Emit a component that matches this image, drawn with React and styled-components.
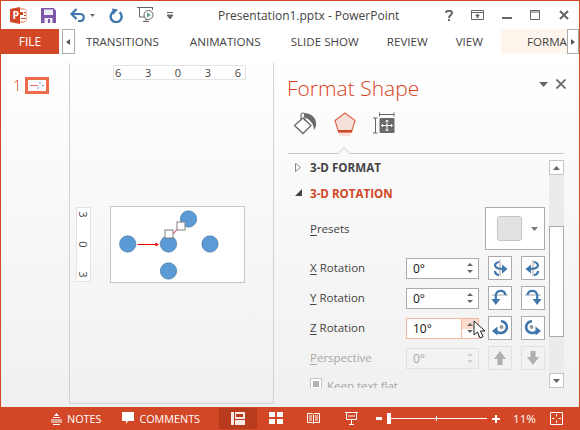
import React from 'react';
import styled, { createGlobalStyle } from 'styled-components';

const RED = '#d24726';
const BLUE = '#3f76ad';

const GlobalStyle = createGlobalStyle`
  html, body {
    margin: 0;
    padding: 0;
    width: 580px;
    height: 430px;
    overflow: hidden;
    background: #fff;
  }
  * { box-sizing: border-box; }
`;

const Window = styled.div`
  width: 580px;
  height: 430px;
  display: flex;
  flex-direction: column;
  border: 1px solid ${RED};
  border-bottom: none;
  font-family: "Open Sans", "Liberation Sans", sans-serif;
  color: #444;
  position: relative;
  overflow: hidden;
`;

const TitleBar = styled.div`
  height: 28px;
  flex: none;
  display: flex;
  align-items: center;
  position: relative;
`;

const QatIcon = styled.span`
  display: flex;
  flex: none;
  margin-left: ${p => p.$gap}px;
`;

const TitleText = styled.div`
  position: absolute;
  left: 217px;
  top: 7px;
  font-size: 12px;
  line-height: 16px;
  color: #444;
  white-space: nowrap;
`;

const WindowButtons = styled.div`
  margin-left: auto;
  display: flex;
  align-items: center;
  gap: 18px;
  padding-right: 10px;
`;

const RibbonRow = styled.div`
  height: 25px;
  flex: none;
  display: flex;
  align-items: stretch;
`;

const FileTab = styled.div`
  width: 59px;
  background: ${RED};
  color: #fff;
  font-size: 12px;
  line-height: 25px;
  text-align: center;
`;

const RibbonScroll = styled.div`
  width: ${p => p.$w}px;
  height: 25px;
  flex: none;
  background: #fff;
  border: 1px solid #ababab;
  margin-left: ${p => p.$left}px;
  display: flex;
  align-items: center;
  justify-content: center;
`;

const RibbonTab = styled.div`
  margin-left: ${p => p.$left}px;
  font-size: 11.6px;
  line-height: 25px;
  color: #444;
  white-space: nowrap;
`;

const ActiveTab = styled.div`
  margin-left: 18px;
  width: 66px;
  flex: none;
  background: #fef6ec;
  font-size: 11.6px;
  line-height: 25px;
  color: #444;
  padding-left: 26px;
  white-space: nowrap;
  overflow: hidden;
`;

const Main = styled.div`
  flex: 1;
  min-height: 0;
  display: flex;
  background: linear-gradient(#ffffff 0%, #fbfbfb 25%, #f0f0f0 100%);
`;

const Thumbs = styled.div`
  width: 68px;
  flex: none;
  display: flex;
  align-items: flex-start;
  padding: 23px 0 0 12px;
  gap: 4px;
`;

const ThumbNumber = styled.div`
  width: 8px;
  font-size: 15px;
  line-height: 17px;
  font-weight: 300;
  color: ${RED};
`;

const Thumb = styled.div`
  width: 24px;
  height: 17px;
  border: 3px solid #ee6a4c;
  background: #fff;
  display: flex;
`;

const Canvas = styled.div`
  width: 205px;
  flex: none;
  margin: 9px 0 3px;
  border-left: 1px solid #d2d2d2;
  border-right: 1px solid #d2d2d2;
  border-bottom: 1px solid #d2d2d2;
  display: flex;
  flex-direction: column;
  padding-top: 2px;
`;

const TopRuler = styled.div`
  width: 133px;
  height: 15px;
  margin-left: 43px;
  background: #fff;
  border: 1px solid #e3e3e3;
  display: flex;
  justify-content: space-between;
  padding: 0 4px 0 1px;
  font-size: 11px;
  line-height: 13px;
  color: #444;
`;

const SlideRow = styled.div`
  display: flex;
  align-items: flex-start;
  margin: 126px 0 0 6px;
  gap: 19px;
`;

const SideRuler = styled.div`
  width: 15px;
  height: 75px;
  margin-top: 1px;
  background: #fff;
  border: 1px solid #e3e3e3;
  display: flex;
  flex-direction: column;
  align-items: center;
  justify-content: space-between;
  padding: 0;
`;

const RulerDigit = styled.span`
  display: block;
  height: 13px;
  width: 13px;
  font-size: 11px;
  line-height: 13px;
  text-align: center;
  transform: rotate(90deg);
  color: #444;
`;

const Slide = styled.div`
  width: 135px;
  height: 77px;
  background: #fff;
  border: 1px solid #c6c6c6;
  display: flex;
`;

const Panel = styled.div`
  flex: 1;
  min-width: 0;
  display: flex;
  flex-direction: column;
  padding-bottom: 19px;
`;

const PanelHeader = styled.div`
  height: 50px;
  flex: none;
  display: flex;
  align-items: flex-start;
  padding: 19px 13px 0 13px;
`;

const PanelTitle = styled.div`
  font-size: 21px;
  line-height: 30px;
  font-weight: 300;
  color: #d8401a;
  white-space: nowrap;
`;

const PanelControls = styled.div`
  margin-left: auto;
  display: flex;
  align-items: center;
  gap: 8px;
  height: 22px;
`;

const PanelTabs = styled.div`
  height: 40px;
  flex: none;
  display: flex;
  align-items: flex-start;
  padding: 8px 0 0 19px;
  gap: 17px;
`;

const TabDivider = styled.div`
  height: 10px;
  flex: none;
  margin: 0 15px 0 14px;
  display: flex;
`;

const PanelBody = styled.div`
  flex: 1;
  min-height: 0;
  display: flex;
`;

const Settings = styled.div`
  width: 275px;
  flex: none;
  overflow: hidden;
  padding-left: 21px;
  display: flex;
  flex-direction: column;
`;

const SectionHead = styled.div`
  height: 26px;
  flex: none;
  display: flex;
  align-items: center;
  gap: 8px;
  font-size: 11.6px;
  font-weight: 700;
  color: ${p => (p.$open ? RED : '#444')};
  white-space: nowrap;
`;

const PresetRow = styled.div`
  height: 43px;
  flex: none;
  display: flex;
  align-items: center;
  margin-top: 1px;
  padding-left: 15px;
`;

const RowLabel = styled.div`
  width: 96px;
  flex: none;
  font-size: 11.5px;
  line-height: 16px;
  color: ${p => (p.$off ? '#a6a6a6' : '#444')};
  white-space: nowrap;
  u { text-underline-offset: 2px; }
`;

const PresetBox = styled.div`
  width: 60px;
  height: 43px;
  margin-left: 79px;
  background: #fff;
  border: 1px solid #ababab;
  display: flex;
  align-items: center;
  padding-left: 11px;
  gap: 9px;
`;

const PresetSwatch = styled.div`
  width: 25px;
  height: 25px;
  background: #e2e2e2;
  border: 1px solid #c4c4c4;
  border-radius: 3px;
`;

const RotationRows = styled.div`
  display: flex;
  flex-direction: column;
  gap: 6px;
  margin-top: 6px;
  flex: none;
`;

const RotationRow = styled.div`
  height: 24px;
  display: flex;
  align-items: center;
  padding-left: 15px;
`;

const Spin = styled.div`
  width: 73px;
  height: 21px;
  flex: none;
  background: ${p => (p.$off ? 'transparent' : '#fff')};
  border: 1px solid ${p => (p.$hot ? '#f2b9a0' : p.$off ? '#e1e1e1' : '#ababab')};
  display: flex;
  align-items: center;
  font-size: 12px;
  color: ${p => (p.$off ? '#a6a6a6' : '#111')};
  padding-left: 6px;
`;

const SpinValue = styled.span`
  flex: 1;
`;

const SpinArrows = styled.div`
  width: 17px;
  align-self: stretch;
  display: flex;
  flex-direction: column;
  align-items: center;
  justify-content: center;
  gap: 4px;
  background: ${p => (p.$hot ? 'linear-gradient(#fbdccf 50%, transparent 50%)' : 'transparent')};
  border-left: ${p => (p.$hot ? '1px solid #f2b9a0' : 'none')};
`;

const SpinTip = styled.i`
  width: 0;
  height: 0;
  border-left: 3px solid transparent;
  border-right: 3px solid transparent;
  ${p => (p.$down
    ? `border-top: 3px solid ${p.$off ? '#d0d0d0' : '#666'};`
    : `border-bottom: 3px solid ${p.$off ? '#d0d0d0' : '#666'};`)}
`;

const IconButton = styled.div`
  width: 24px;
  height: 24px;
  flex: none;
  margin-left: ${p => p.$left}px;
  background: ${p => (p.$off ? 'transparent' : '#fff')};
  border: 1px solid ${p => (p.$off ? '#e1e1e1' : '#ababab')};
  display: flex;
  align-items: center;
  justify-content: center;
`;

const KeepRow = styled.div`
  height: 16px;
  margin-top: 6px;
  padding-left: 15px;
  flex: none;
  display: flex;
  align-items: center;
  gap: 5px;
  font-size: 11.5px;
  color: #a6a6a6;
`;

const KeepLabel = styled.span`
  margin-top: 3px;
  white-space: nowrap;
`;

const KeepCheck = styled.div`
  width: 12px;
  height: 12px;
  border: 1px solid #c6c6c6;
  background: #fff;
  padding: 2px;
  &::after {
    content: '';
    display: block;
    width: 100%;
    height: 100%;
    background: #b4b4b4;
  }
`;

const ScrollBar = styled.div`
  width: 15px;
  flex: none;
  display: flex;
  flex-direction: column;
  margin-top: 6px;
  background: #ebebeb;
`;

const ScrollButton = styled.div`
  width: 15px;
  height: 15px;
  flex: none;
  background: #fff;
  border: 1px solid #c6c6c6;
  display: flex;
  align-items: center;
  justify-content: center;
`;

const ScrollThumb = styled.div`
  flex: none;
  height: 111px;
  margin-top: 51px;
  background: #fff;
  border: 1px solid #ababab;
`;

const ScrollSpacer = styled.div`
  flex: 1;
`;

const StatusBar = styled.div`
  height: 23px;
  flex: none;
  margin: 0 -1px;
  background: ${RED};
  color: #fff;
  display: flex;
  align-items: stretch;
  font-size: 10.8px;
`;

const StatusItem = styled.div`
  display: flex;
  align-items: center;
  gap: 5px;
  margin-left: ${p => p.$left}px;
  white-space: nowrap;
`;

const ZoomLabel = styled(StatusItem)`
  font-size: 11.6px;
  margin-left: 13px;
`;

const ViewActive = styled.div`
  width: 38px;
  margin: 1px 0 1px 19px;
  background: #b83b1d;
  display: flex;
  align-items: center;
  justify-content: center;
`;

const ZoomTrack = styled.div`
  width: 100px;
  height: 1px;
  background: #fff;
  align-self: center;
  position: relative;
`;

const ZoomKnob = styled.div`
  position: absolute;
  left: 0;
  top: -5px;
  width: 4px;
  height: 11px;
  background: #fff;
`;

const ZoomTick = styled.div`
  position: absolute;
  left: 49px;
  top: -2px;
  width: 1px;
  height: 5px;
  background: #fff;
`;

const Cursor = styled.svg`
  position: absolute;
  left: 472px;
  top: 319px;
`;

const PptLogo = () => (
  <svg width="18" height="17" viewBox="0 0 18 17">
    <path d="M6 1h8l3 2v11l-3 2H6z" fill="#f3b9a6" />
    <rect x="8" y="3" width="8" height="11" fill="#fff" />
    <path d="M10 5h3v3h-3zM14 5h2v1h-2zM14 8h2v1h-2zM11 11h5v1h-5z" fill="#d24726" />
    <path d="M0 2l10-2v17L0 15z" fill="#d24726" />
    <text x="2.400" y="12.300" fontSize="10.500" fontWeight="700" fill="#fff" fontFamily="Open Sans, sans-serif">P</text>
  </svg>
);

const SaveIcon = () => (
  <svg width="15" height="15" viewBox="0 0 15 15">
    <path d="M0 0h12.500L15 2.500V15H0z" fill="#7f57a8" />
    <rect x="3" y="1.500" width="9" height="5.500" fill="#f0ebf5" />
    <rect x="3.500" y="10" width="8" height="5" fill="#f0ebf5" />
    <rect x="7" y="11" width="2" height="4" fill="#7f57a8" />
  </svg>
);

const UndoIcon = () => (
  <svg width="15" height="14" viewBox="0 0 15 14" fill="none">
    <path d="M2 6h8c5 0 5 7 0 7H8" stroke={BLUE} strokeWidth="2.200" />
    <path d="M6.500 1L1.500 6l5 5" stroke={BLUE} strokeWidth="2.200" />
  </svg>
);

const RedoIcon = () => (
  <svg width="14" height="15" viewBox="0 0 14 15" fill="none">
    <path d="M4.500 3.800A5.500 5.500 0 1 0 10.500 4.200" stroke={BLUE} strokeWidth="2.400" />
    <path d="M3 .500L9 1.500 4 7z" fill={BLUE} />
  </svg>
);

const PresentIcon = () => (
  <svg width="17" height="16" viewBox="0 0 17 16" fill="none">
    <path d="M0 .500h16" stroke="#666" />
    <path d="M2.500 1v9h5" stroke="#666" />
    <path d="M15.500 1v2" stroke="#666" />
    <circle cx="11.500" cy="8" r="4.500" stroke="#666" />
    <path d="M10 5.500l4 2.500-4 2.500z" fill="#5aa58c" />
    <path d="M6 14.500h6M9 12v3" stroke="#666" />
  </svg>
);

const Tiny = ({ down = true, color = '#666', w = 5 }) => (
  <svg width={w * 2 - 1} height={w} viewBox={`0 0 ${w * 2 - 1} ${w}`}>
    <path d={down ? `M0 0h${w * 2 - 1}L${w - 0.5} ${w}z` : `M0 ${w}h${w * 2 - 1}L${w - 0.5} 0z`} fill={color} />
  </svg>
);

const FillIcon = () => (
  <svg width="24" height="23" viewBox="0 0 24 23" fill="none">
    <path d="M10 6L1.500 13.500 10 21.500l8-8z" stroke="#6a6a6a" strokeWidth="1.300" fill="#fff" />
    <path d="M8 8V3a2 2 0 0 1 4 0v6" stroke="#6a6a6a" strokeWidth="1.100" />
    <path d="M11 1c5 0 11 3 12 9 .5 3-.5 6-2 8-.5-4-1-6-3-8-1-2-4-4-7-5z" fill="#6a6a6a" />
  </svg>
);

const EffectIcon = () => (
  <svg width="22" height="25" viewBox="0 0 22 25">
    <path d="M11 1L21 8.500 17.500 20h-13L1 8.500z" fill="#f8e0da" stroke="#d9694c" strokeWidth="1.200" />
    <rect x="4" y="18" width="14" height="2.400" fill="#d24726" />
    <path d="M5 21h12l-1 3H6z" fill="#f8e0da" />
  </svg>
);

const SizeIcon = () => (
  <svg width="22" height="22" viewBox="0 0 22 22">
    <path d="M6.500 .5v4M21 .5v4M6.500 2.500h14.500M4.500 6H0M4.500 21H0M2.500 6v15" stroke="#666" fill="none" strokeWidth="1" />
    <rect x="6.500" y="6" width="15" height="15" rx="1" fill="#6a6a6a" />
    <path d="M14 8v11M8.500 13.500h11M12.500 9.500L14 8l1.500 1.500M12.500 17.500L14 19l1.500-1.500M10 12l-1.500 1.500L10 15M18 12l1.500 1.500L18 15" stroke="#fff" fill="none" strokeWidth="1" />
  </svg>
);

// arrows on the rotation buttons
const RotIcon = ({ kind, flip }) => {
  const paths = {
    x: (
      <>
        <path d="M9 1v16" stroke="#8a8a8a" strokeWidth=".8" />
        <path d="M8 3C4 3.500 3 6.500 5 8.200c1 1.300 4 1.800 7 1.800" stroke={BLUE} strokeWidth="2.200" fill="none" />
        <path d="M11 5.500l5.500 4.500L11 14.500z" fill={BLUE} />
        <path d="M4 12c0 2.500 2 3.800 4 4.300" stroke={BLUE} strokeWidth="2.200" fill="none" />
      </>
    ),
    y: (
      <>
        <path d="M1 6h16" stroke="#8a8a8a" strokeWidth=".8" />
        <path d="M14.500 6C13.500 .5 6 .5 4.800 6v5" stroke={BLUE} strokeWidth="2.200" fill="none" />
        <path d="M.5 10h8.800L4.800 16z" fill={BLUE} />
      </>
    ),
    z: (
      <>
        <circle cx="10.500" cy="8" r="2" fill="#9a9a9a" />
        <path d="M10 2.200A5.900 5.900 0 1 1 6 12.500" stroke={BLUE} strokeWidth="2.600" fill="none" />
        <path d="M6.500 7.500L1 12l5.500 4.500z" fill={BLUE} />
      </>
    ),
  };
  return (
    <svg width="18" height="18" viewBox="0 0 18 18" style={flip ? { transform: 'scaleX(-1)' } : undefined}>
      {paths[kind]}
    </svg>
  );
};

const BlockArrow = ({ down }) => (
  <svg width="12" height="14" viewBox="0 0 12 14">
    <path d={down ? 'M3.500 0h5v6H12l-6 8-6-8h3.500z' : 'M3.500 14h5V8H12L6 0 0 8h3.500z'} fill="#b0b0b0" />
  </svg>
);

const rotationRows = [
  { label: 'X', rest: ' Rotation', value: '0°', kind: 'x' },
  { label: 'Y', rest: ' Rotation', value: '0°', kind: 'y' },
  { label: 'Z', rest: ' Rotation', value: '10°', kind: 'z', hot: true },
];

const App = () => (
  <Window>
    <GlobalStyle />
    <TitleBar>
      <QatIcon $gap={9}><PptLogo /></QatIcon>
      <QatIcon $gap={13}><SaveIcon /></QatIcon>
      <QatIcon $gap={14}><UndoIcon /></QatIcon>
      <QatIcon $gap={5}><Tiny w={3} /></QatIcon>
      <QatIcon $gap={14}><RedoIcon /></QatIcon>
      <QatIcon $gap={14}><PresentIcon /></QatIcon>
      <QatIcon $gap={13}>
        <svg width="6" height="7" viewBox="0 0 6 7">
          <path d="M0 .5h6M0 3h6L3 7z" stroke="#666" strokeWidth="1" fill="#666" />
        </svg>
      </QatIcon>
      <TitleText>Presentation1.pptx - PowerPoint</TitleText>
      <WindowButtons>
        <svg width="8" height="11" viewBox="0 0 8 11">
          <path d="M1 3c0-3 6-3 6 0 0 2-3 2-3 5" stroke="#666" strokeWidth="2" fill="none" />
          <rect x="3" y="9" width="2" height="2" fill="#666" />
        </svg>
        <svg width="13" height="10" viewBox="0 0 13 10">
          <path d="M.500.500h12v9H.500zM.500 2.500h12" stroke="#666" fill="none" />
          <path d="M6.500 3.500L9 6H7.500v2h-2V6H4z" fill="#666" />
        </svg>
        <svg width="10" height="10" viewBox="0 0 10 10">
          <rect y="7" width="10" height="2" fill="#666" />
        </svg>
        <svg width="11" height="10" viewBox="0 0 11 10">
          <path d="M.500.500h9v9h-9zM.500 2h9" stroke="#666" fill="none" strokeWidth="1" />
        </svg>
        <svg width="10" height="10" viewBox="0 0 10 10">
          <path d="M1 1l8 8M9 1l-8 8" stroke="#666" strokeWidth="2" />
        </svg>
      </WindowButtons>
    </TitleBar>

    <RibbonRow>
      <FileTab>FILE</FileTab>
      <RibbonScroll $w={13} $left={3}><svg width="4" height="6"><path d="M4 0v6L0 3z" fill="#555" /></svg></RibbonScroll>
      <RibbonTab $left={11}>TRANSITIONS</RibbonTab>
      <RibbonTab $left={31}>ANIMATIONS</RibbonTab>
      <RibbonTab $left={30}>SLIDE SHOW</RibbonTab>
      <RibbonTab $left={28}>REVIEW</RibbonTab>
      <RibbonTab $left={28}>VIEW</RibbonTab>
      <ActiveTab>FORMAT</ActiveTab>
      <RibbonScroll $w={12} $left={0}><svg width="4" height="6"><path d="M0 0v6l4-3z" fill="#555" /></svg></RibbonScroll>
    </RibbonRow>

    <Main>
      <Thumbs>
        <ThumbNumber>1</ThumbNumber>
        <Thumb>
          <svg width="18" height="11" viewBox="0 0 18 11">
            <path d="M2 5.500h8" stroke="#e36a6a" strokeWidth="1" />
            <path d="M11 3h2M14 5.500h2M9 8h2" stroke="#5b9bd5" strokeWidth="1.200" />
          </svg>
        </Thumb>
      </Thumbs>

      <Canvas>
        <TopRuler>
          <span>6</span><span>3</span><span>0</span><span>3</span><span>6</span>
        </TopRuler>
        <SlideRow>
          <SideRuler>
            <RulerDigit>3</RulerDigit>
            <RulerDigit>0</RulerDigit>
            <RulerDigit>3</RulerDigit>
          </SideRuler>
          <Slide>
            <svg width="133" height="75" viewBox="0 0 133 75">
              <g fill="#5b9bd5" stroke="#41719c" strokeWidth=".6">
                <circle cx="16.700" cy="37" r="8.200" />
                <circle cx="57.500" cy="37" r="8.200" />
                <circle cx="99" cy="37" r="8.200" />
                <circle cx="57.500" cy="64" r="8.200" />
                <circle cx="77.500" cy="12" r="8.200" />
              </g>
              <path d="M26.500 37.500H45" stroke="#f00000" strokeWidth="1" />
              <path d="M48 37.500l-3.500-2v4z" fill="#f00000" />
              <path d="M62 27l6-7" stroke="#f08080" strokeWidth="1.200" />
              <rect x="54" y="23" width="8" height="8" fill="#fff" stroke="#808080" />
              <rect x="66" y="15" width="8" height="8" fill="#fff" stroke="#808080" />
            </svg>
          </Slide>
        </SlideRow>
      </Canvas>

      <Panel>
        <PanelHeader>
          <PanelTitle>Format Shape</PanelTitle>
          <PanelControls>
            <Tiny w={5} color="#666" />
            <svg width="10" height="10" viewBox="0 0 10 10">
              <path d="M.500.500l9 9M9.500.500l-9 9" stroke="#666" strokeWidth="1.800" />
            </svg>
          </PanelControls>
        </PanelHeader>
        <PanelTabs>
          <FillIcon />
          <EffectIcon />
          <SizeIcon />
        </PanelTabs>
        <TabDivider>
          <svg width="276" height="10" viewBox="0 0 276 10">
            <path d="M0 9.500h50l6-6 6 6h214" stroke="#c8c8c8" fill="none" />
          </svg>
        </TabDivider>
        <PanelBody>
          <Settings>
            <SectionHead>
              <svg width="7" height="9" viewBox="0 0 7 9"><path d="M.500.500v8l5-4z" stroke="#888" fill="#fff" /></svg>
              3-D FORMAT
            </SectionHead>
            <SectionHead $open>
              <svg width="7" height="9" viewBox="0 0 7 9"><path d="M0 7h7V0z" fill="#444" /></svg>
              3-D ROTATION
            </SectionHead>
            <PresetRow>
              <RowLabel><u>P</u>resets</RowLabel>
              <PresetBox>
                <PresetSwatch />
                <Tiny w={4} color="#777" />
              </PresetBox>
            </PresetRow>
            <RotationRows>
              {rotationRows.map(row => (
                <RotationRow key={row.kind}>
                  <RowLabel><u>{row.label}</u>{row.rest}</RowLabel>
                  <Spin $hot={row.hot}>
                    <SpinValue>{row.value}</SpinValue>
                    <SpinArrows $hot={row.hot}>
                      <SpinTip />
                      <SpinTip $down />
                    </SpinArrows>
                  </Spin>
                  <IconButton $left={9}><RotIcon kind={row.kind} /></IconButton>
                  <IconButton $left={9}><RotIcon kind={row.kind} flip /></IconButton>
                </RotationRow>
              ))}
              <RotationRow>
                <RowLabel $off><u>P</u>erspective</RowLabel>
                <Spin $off>
                  <SpinValue>0°</SpinValue>
                  <SpinArrows>
                    <SpinTip $off />
                    <SpinTip $off $down />
                  </SpinArrows>
                </Spin>
                <IconButton $off $left={9}><BlockArrow /></IconButton>
                <IconButton $off $left={9}><BlockArrow down /></IconButton>
              </RotationRow>
            </RotationRows>
            <KeepRow>
              <KeepCheck />
              <KeepLabel>Keep text flat</KeepLabel>
            </KeepRow>
          </Settings>
          <ScrollBar>
            <ScrollButton><Tiny w={4} down={false} color="#666" /></ScrollButton>
            <ScrollThumb />
            <ScrollSpacer />
            <ScrollButton><Tiny w={4} color="#666" /></ScrollButton>
          </ScrollBar>
        </PanelBody>
      </Panel>
    </Main>

    <StatusBar>
      <StatusItem $left={51}>
        <svg width="11" height="12" viewBox="0 0 11 12">
          <path d="M5.500 0l2.500 3H3z" fill="#fff" />
          <path d="M2 4.500h7M0 7h11M0 9h11M2 11.500h7" stroke="#fff" strokeWidth="1" />
        </svg>
        NOTES
      </StatusItem>
      <StatusItem $left={21}>
        <svg width="12" height="13" viewBox="0 0 12 13">
          <path d="M0 0h12v9H6l-2 3V9H0z" fill="#fff" />
        </svg>
        COMMENTS
      </StatusItem>
      <ViewActive>
        <svg width="14" height="13" viewBox="0 0 14 13">
          <path d="M0 0h14v13H0z" fill="#fbe9e4" />
          <path d="M3.500 0v13" stroke="#b83b1d" />
          <path d="M5 2h7v3H5zM4 7h10v1H4z" fill="#b83b1d" />
        </svg>
      </ViewActive>
      <StatusItem $left={12}>
        <svg width="14" height="13" viewBox="0 0 14 13">
          <path d="M0 0h6v5H0zM8 0h6v5H8zM0 7h6v5H0zM8 7h6v5H8z" fill="#fff" />
        </svg>
      </StatusItem>
      <StatusItem $left={24}>
        <svg width="13" height="13" viewBox="0 0 13 13" fill="none">
          <path d="M.500 1.500h5l1 1 1-1h5v9h-5l-1 1-1-1h-5zM6.500 2.500v9M2 4h3M2 6h3M2 8h3M8 4h3M8 6h3M8 8h3" stroke="#fff" />
        </svg>
      </StatusItem>
      <StatusItem $left={25}>
        <svg width="13" height="13" viewBox="0 0 13 13" fill="none">
          <path d="M0 .500h13M1.500 1v6.500h10V1M3 4h7M6.500 8v5M4 12.500h5" stroke="#fff" />
        </svg>
      </StatusItem>
      <StatusItem $left={18}>
        <svg width="6" height="3" viewBox="0 0 6 3"><rect width="6" height="3" fill="#fff" /></svg>
        <ZoomTrack>
          <ZoomKnob />
          <ZoomTick />
        </ZoomTrack>
        <svg width="8" height="8" viewBox="0 0 8 8"><path d="M0 3h8v2H0zM3 0h2v8H3z" fill="#fff" /></svg>
      </StatusItem>
      <ZoomLabel>11%</ZoomLabel>
      <StatusItem $left={14}>
        <svg width="13" height="13" viewBox="0 0 13 13" fill="none">
          <path d="M.500.500h12v12H.500z" stroke="#fff" />
          <path d="M6.500 2v2.500M6.500 8.500V11M2 6.500h2.500M8.500 6.500H11" stroke="#fff" />
        </svg>
      </StatusItem>
    </StatusBar>

    <Cursor width="14" height="20" viewBox="0 0 14 20">
      <path d="M1 1v14l3.500-3 2.500 6 3-1.300-2.500-5.700H12z" fill="#fff" stroke="#222" strokeWidth="1" />
    </Cursor>
  </Window>
);

export default App;
